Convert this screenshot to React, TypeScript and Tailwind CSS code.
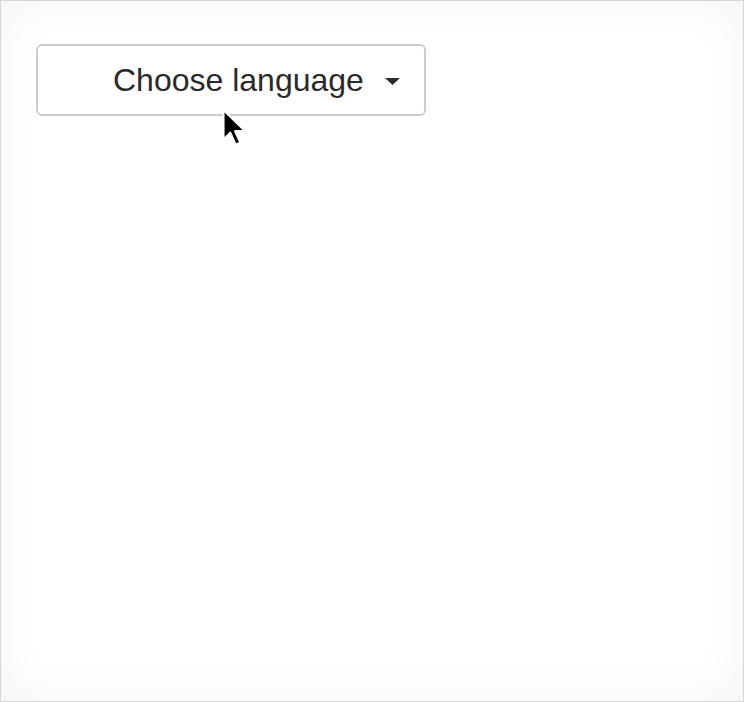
export default function App() {
  return (
    <div className="relative h-[702px] w-[744px] overflow-hidden border border-[#d6d6d6] bg-white shadow-[inset_0_0_48px_#f4f4f4]">
      <div className="pl-[35px] pt-[43px]">
        <button
          type="button"
          className="flex h-[72px] w-[390px] items-center rounded-[6px] border-2 border-[#cccccc] bg-white pl-[75px] text-[#2a2a2a]"
          style={{ fontFamily: '"Liberation Sans", Arial, sans-serif' }}
        >
          <span className="text-[32px] leading-none">Choose language</span>
          <svg className="ml-[21px] mt-[2px]" width="15" height="7" viewBox="0 0 15 7">
            <path d="M0 0h15L7.5 7z" fill="#2a2a2a" />
          </svg>
        </button>
      </div>

      {/* mouse pointer */}
      <svg
        className="absolute left-[219px] top-[107px]"
        width="28"
        height="42"
        viewBox="0 0 26 40"
      >
        <path
          d="M3 2v28l6.5-6.5 5 11.5 4.5-2-5-11h9.5z"
          fill="#000"
          stroke="#fff"
          strokeWidth="2"
          strokeLinejoin="round"
        />
      </svg>
    </div>
  );
}
